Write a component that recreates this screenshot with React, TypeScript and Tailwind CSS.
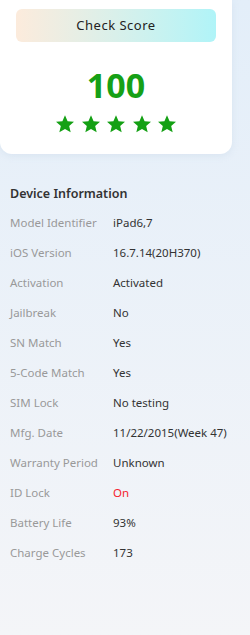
const rows: { label: string; value: string; red?: boolean }[] = [
  { label: 'Model Identifier', value: 'iPad6,7' },
  { label: 'iOS Version', value: '16.7.14(20H370)' },
  { label: 'Activation', value: 'Activated' },
  { label: 'Jailbreak', value: 'No' },
  { label: 'SN Match', value: 'Yes' },
  { label: '5-Code Match', value: 'Yes' },
  { label: 'SIM Lock', value: 'No testing' },
  { label: 'Mfg. Date', value: '11/22/2015(Week 47)' },
  { label: 'Warranty Period', value: 'Unknown' },
  { label: 'ID Lock', value: 'On', red: true },
  { label: 'Battery Life', value: '93%' },
  { label: 'Charge Cycles', value: '173' },
]

function Star() {
  return (
    <svg width="20" height="20" viewBox="0 0 24 24">
      <path d="M12 1.5l3.1 7.1 7.7.7-5.8 5.1 1.8 7.6L12 18l-6.8 4 1.8-7.6-5.8-5.1 7.7-.7z" fill="#14a014" />
    </svg>
  )
}

export default function App() {
  return (
    <div className="min-h-screen w-[250px] bg-gradient-to-b from-[#e3eef9] to-[#f4f5f8] font-['Noto_Sans',sans-serif]">
      <div className="mr-[18px] rounded-b-xl bg-white pt-[9px] pb-[20px] shadow-[0_2px_6px_rgba(180,200,225,0.25)]">
        <div className="mx-4 flex h-[33px] items-center justify-center rounded-md bg-gradient-to-r from-[#fcebdc] to-[#b0f4f8] text-[13px] tracking-[0.5px] text-[#222]">
          Check Score
        </div>
        <div className="mt-[23px] text-center text-[34px] font-bold leading-[40px] text-[#16a016]">100</div>
        <div className="mt-[9px] flex justify-center gap-[5.5px]">
          <Star />
          <Star />
          <Star />
          <Star />
          <Star />
        </div>
      </div>
      <div className="px-[10px] pt-[30px]">
        <h2 className="text-[12.5px] font-semibold leading-[20px] text-[#333]">Device Information</h2>
        <div className="mt-[4px]">
          {rows.map((row) => (
            <div key={row.label} className="flex h-[30px] items-center text-[11.5px]">
              <span className="w-[103px] text-[#999]">{row.label}</span>
              <span className={row.red ? 'text-[#f5222d]' : 'text-[#333]'}>{row.value}</span>
            </div>
          ))}
        </div>
      </div>
    </div>
  )
}
